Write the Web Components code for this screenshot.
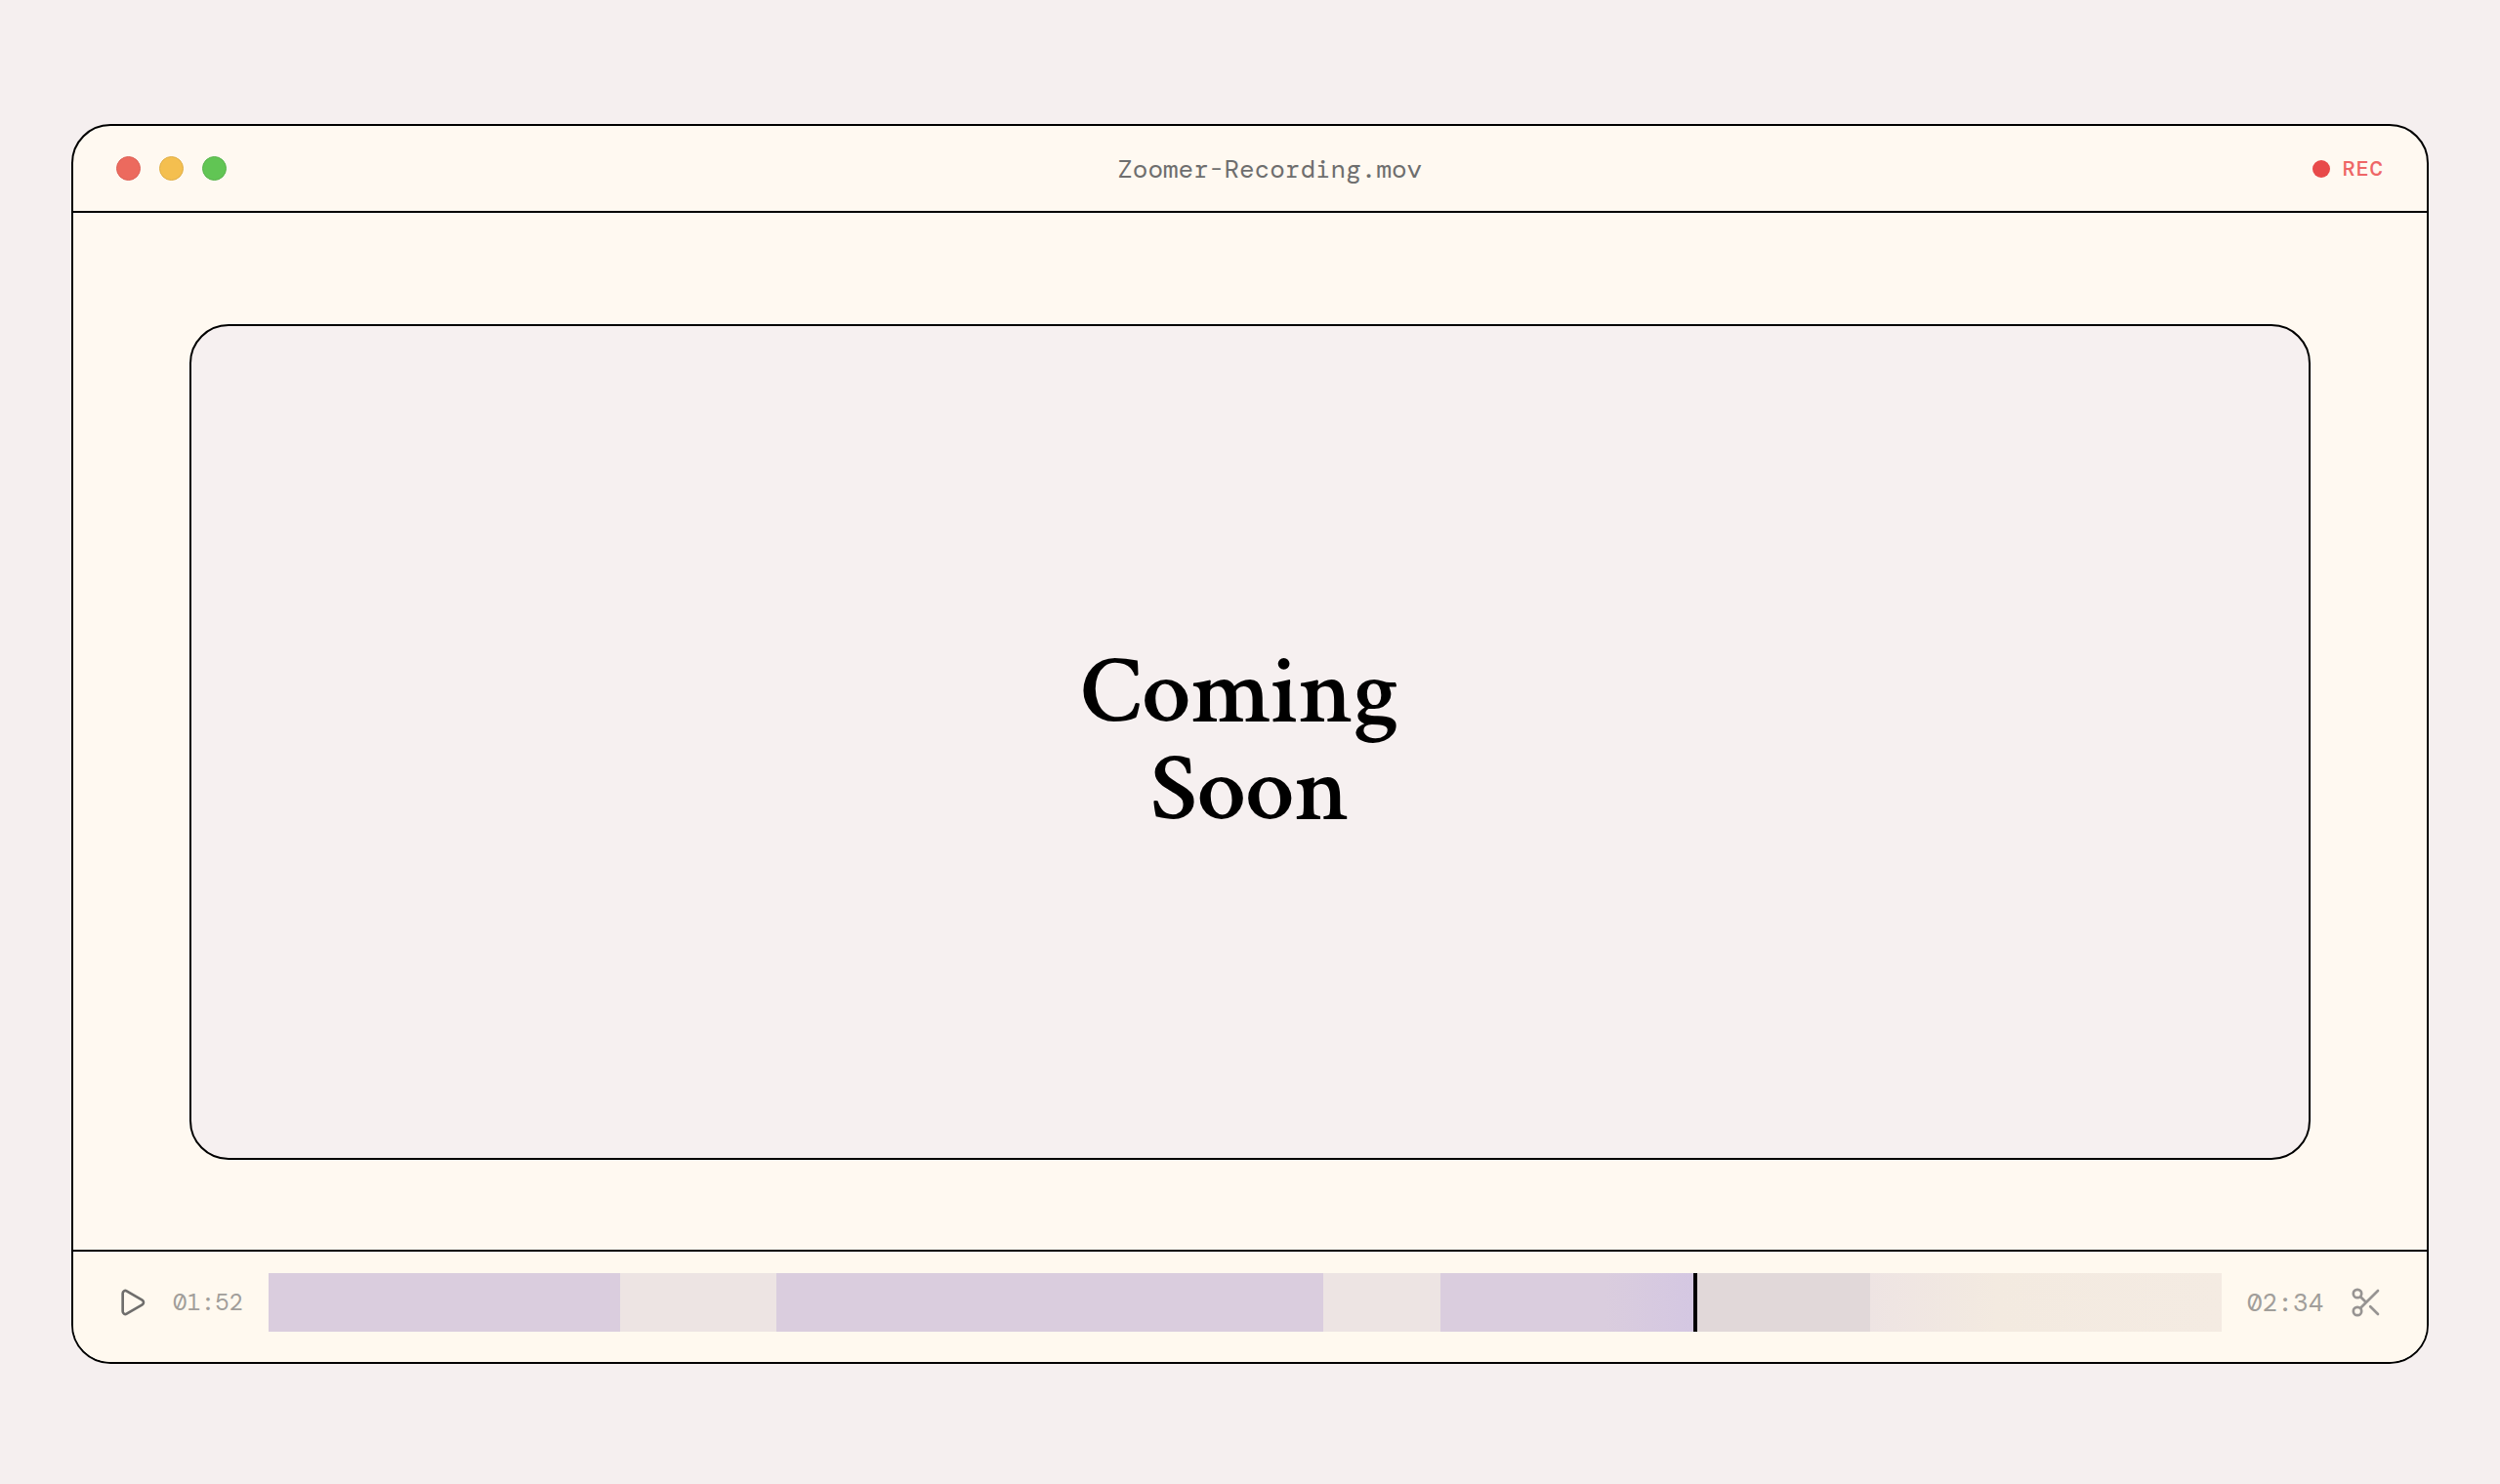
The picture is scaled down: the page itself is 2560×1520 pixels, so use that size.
<!DOCTYPE html>
<html lang="en">
<head>
<meta charset="utf-8">
<meta name="viewport" content="width=device-width, initial-scale=1">
<title>Zoomer-Recording.mov</title>
<style>
  body { margin: 0; background: #f5efef; }
</style>
</head>
<body>
<recorder-page>
  <recorder-window>
    <title-bar slot="header" filename="Zoomer-Recording.mov"></title-bar>
    <preview-screen>Coming 
Soon</preview-screen>
    <player-bar slot="footer" elapsed="01:52" duration="02:34"></player-bar>
  </recorder-window>
</recorder-page>
<script>
const define = (name, html) => {
  customElements.define(name, class extends HTMLElement {
    constructor() {
      super();
      const root = this.attachShadow({ mode: "open" });
      const tpl = document.createElement("template");
      tpl.innerHTML = html;
      root.append(tpl.content.cloneNode(true));
    }
    connectedCallback() {
      this.shadowRoot.querySelectorAll("[data-attr]").forEach(el => {
        el.textContent = this.getAttribute(el.dataset.attr);
      });
    }
  });
};

define("recorder-page", `
<style>
  :host {
    display: flex; box-sizing: border-box; min-height: 100vh;
    padding: 127px 73px 123px;
    --ink: #000; --line: 2px solid var(--ink);
    --paper: #fff9f1; --mist: #f6f0f0;
    font-family: "DM Mono", "Liberation Mono", monospace;
  }
</style>
<slot></slot>`);

define("recorder-window", `
<style>
  :host {
    display: flex; flex-direction: column; flex: 1; min-width: 0;
    border: var(--line); border-radius: 40px; overflow: hidden;
    background: var(--paper);
  }
  main { display: flex; flex: 1; padding: 114px 119px 92px; }
</style>
<slot name="header"></slot>
<main><slot></slot></main>
<slot name="footer"></slot>`);

define("title-bar", `
<style>
  :host { display: block; border-bottom: var(--line); }
  header {
    display: flex; align-items: center; justify-content: space-between;
    height: 87px; padding: 0 44px;
  }
  .lights { display: flex; gap: 19px; }
  .lights button {
    box-sizing: border-box; width: 25px; height: 25px; padding: 0;
    border: 1px solid var(--rim); border-radius: 50%; background: var(--fill);
  }
  .red { --fill: #ec6a5e; --rim: #dc6157; }
  .yellow { --fill: #f4bf4f; --rim: #dfae49; }
  .green { --fill: #61c554; --rim: #59b34d; }
  h1 { margin: 0; font-size: 26px; font-weight: 400; line-height: 32px; color: #6e6e6e; }
  .rec { display: flex; align-items: center; gap: 12px; font-size: 22px; font-weight: 500; letter-spacing: 1px; line-height: 32px; color: #ee6666; }
  .rec i { width: 18px; height: 18px; border-radius: 50%; background: #e84a4a; }
</style>
<header>
  <div class="lights">
    <button class="red" aria-label="Close"></button>
    <button class="yellow" aria-label="Minimize"></button>
    <button class="green" aria-label="Zoom"></button>
  </div>
  <h1 data-attr="filename"></h1>
  <div class="rec"><i></i><span>REC</span></div>
</header>`);

define("preview-screen", `
<style>
  :host {
    display: flex; flex: 1; align-items: center; justify-content: center;
    box-sizing: border-box; padding-bottom: 2px;
    border: var(--line); border-radius: 40px; background: var(--mist);
  }
  h2 {
    margin: 0; white-space: pre; text-align: center; color: var(--ink);
    font: 600 100px/100px "Crimson Text", "Crimson Pro", "Liberation Serif", serif;
  }
</style>
<h2><slot></slot></h2>`);

define("time-line", `
<style>
  :host { display: grid; flex: 1; min-width: 0; height: 60px; }
  .clips, input { grid-area: 1 / 1; }
  .clips { display: grid; grid-template-columns: 18fr 8fr 28fr 6fr 13fr 9fr 18fr; }
  .clip { background: #dacdde; }
  .gap { background: #ede4e3; }
  .current { background: linear-gradient(90deg, #dacdde 65%, #d4c7e2); }
  .ahead { background: #e1d8d9; }
  .rest { background: linear-gradient(90deg, #eee4e3, #f3eae0 36%, #f4ebe2); }
  input {
    appearance: none; width: 100%; height: 60px; margin: 0; background: none;
  }
  input::-webkit-slider-thumb {
    appearance: none; width: 4px; height: 60px; border: 0; border-radius: 0; background: var(--ink);
  }
</style>
<div class="clips">
  <div class="clip"></div><div class="gap"></div><div class="clip"></div><div class="gap"></div>
  <div class="current"></div><div class="ahead"></div><div class="rest"></div>
</div>
<input type="range" min="0" max="1000" value="731" aria-label="Playback position">`);

define("player-bar", `
<style>
  :host { display: block; border-top: var(--line); background: #fff9ef; }
  footer { display: flex; align-items: center; gap: 26px; padding: 22px 44px 31px; }
  button { display: block; flex: none; padding: 0; border: 0; background: none; }
  svg { display: block; fill: none; stroke: currentColor; stroke-linecap: round; stroke-linejoin: round; }
  .play { color: #6f6e6c; }
  .cut { color: #979492; }
  time { line-height: 32px; color: #a19e9a; }
  .elapsed { font-size: 24px; }
  .duration { font-size: 26px; }
</style>
<footer>
  <button class="play" aria-label="Play">
    <svg width="32" height="32" viewBox="0 0 24 24" stroke-width="2"><path d="M5 5a2 2 0 0 1 3.008-1.728l11.997 6.998a2 2 0 0 1 .003 3.458l-12 7A2 2 0 0 1 5 19z"/></svg>
  </button>
  <time class="elapsed" data-attr="elapsed"></time>
  <time-line></time-line>
  <time class="duration" data-attr="duration"></time>
  <button class="cut" aria-label="Cut">
    <svg width="36" height="36" viewBox="0 0 24 24" stroke-width="1.8"><circle cx="6" cy="6" r="2.8"/><circle cx="6" cy="18" r="2.8"/><path d="M8.12 8.12 12 12M20 4 8.12 15.88M14.8 14.8 20 20"/></svg>
  </button>
</footer>`);
</script>
</body>
</html>
